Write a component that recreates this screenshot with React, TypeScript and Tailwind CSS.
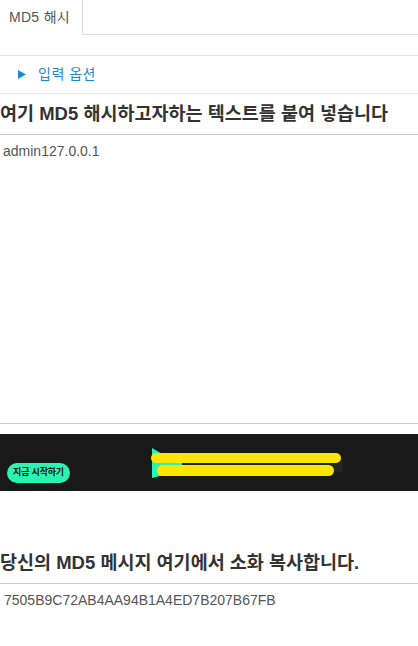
import React from "react";

export default function App() {
  return (
    <div
      className="w-[418px] h-[646px] overflow-hidden bg-white"
      style={{ fontFamily: '"Liberation Sans", Arial, "Noto Sans CJK KR", sans-serif' }}
    >
      {/* Tabs */}
      <div className="flex h-[35px]">
        <div className="w-[83px] h-[35px] border-r border-[#dddddd] flex items-center pl-[9px] text-[14px] text-[#555555] tracking-[0.3px]">
          MD5 해시
        </div>
        <div className="flex-1 border-b border-[#dddddd]" />
      </div>

      <div className="h-[20px]" />

      {/* Accordion */}
      <div className="h-[39px] border-t border-b border-[#e5e5e5] flex items-center pl-[18px] text-[14px] text-[#1b88cf] tracking-[0.5px]">
        <svg width="8" height="9" viewBox="0 0 8 9" className="mr-[12px]">
          <polygon points="0,0 8,4.5 0,9" fill="#1b88cf" />
        </svg>
        <span>입력 옵션</span>
      </div>

      {/* Heading 1 */}
      <div className="h-[40px] flex items-center text-[18.5px] font-bold text-[#333333] whitespace-nowrap">
        여기 MD5 해시하고자하는 텍스트를 붙여 넣습니다
      </div>

      {/* Textarea */}
      <div className="h-[290px] border-t border-b border-[#cccccc] px-[3px] pt-[6px] text-[14px] text-[#555555]">
        admin127.0.0.1
      </div>

      <div className="h-[10px]" />

      {/* Banner */}
      <div className="relative h-[57px] bg-[#191919]">
        <div className="absolute left-[7px] top-[29px] h-[20px] w-[63px] rounded-full bg-[#2bf3b2] flex items-center justify-center text-[9px] tracking-[-0.2px] font-bold text-[#111111] whitespace-nowrap">
          지금 시작하기
        </div>
        <svg className="absolute left-[148px] top-[11px]" width="200" height="36" viewBox="0 0 200 36">
          <rect x="10" y="15" width="185" height="12" fill="#1e2626" />
          <polygon points="4,3 16,10 16,30 4,33" fill="#2bf3b2" />
          <rect x="12" y="18" width="22" height="5" fill="#2bf3b2" />
          <rect x="3" y="8" width="190" height="10" rx="5" fill="#ffe500" />
          <rect x="9" y="20" width="177" height="11" rx="5.5" fill="#ffe500" />
        </svg>
      </div>

      <div className="h-[52px]" />

      {/* Heading 2 */}
      <div className="h-[40px] flex items-center text-[18.5px] font-bold text-[#333333] whitespace-nowrap">
        당신의 MD5 메시지 여기에서 소화 복사합니다.
      </div>

      <div className="border-t border-[#cccccc] px-[4px] pt-[6px] text-[14px] text-[#555555]">
        7505B9C72AB4AA94B1A4ED7B207B67FB
      </div>
    </div>
  );
}
